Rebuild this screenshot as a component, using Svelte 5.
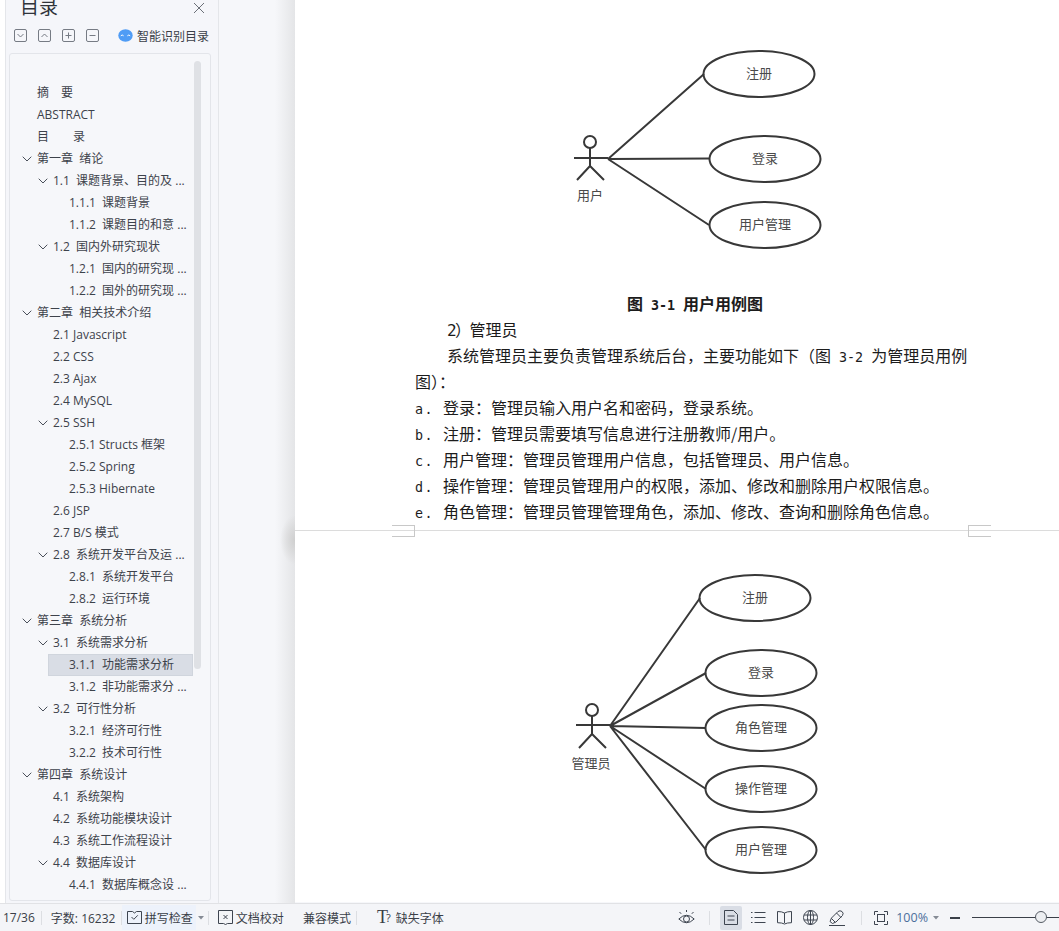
<script lang="ts">
  // level: indent depth, arrow: has a collapse chevron
  const toc = [
    { t: '摘\u3000要', l: 0 },
    { t: 'ABSTRACT', l: 0 },
    { t: '目\u3000\u3000录', l: 0 },
    { t: '第一章  绪论', l: 0, a: true },
    { t: '1.1  课题背景、目的及 ...', l: 1, a: true },
    { t: '1.1.1  课题背景', l: 2 },
    { t: '1.1.2  课题目的和意 ...', l: 2 },
    { t: '1.2  国内外研究现状', l: 1, a: true },
    { t: '1.2.1  国内的研究现 ...', l: 2 },
    { t: '1.2.2  国外的研究现 ...', l: 2 },
    { t: '第二章  相关技术介绍', l: 0, a: true },
    { t: '2.1 Javascript', l: 1 },
    { t: '2.2 CSS', l: 1 },
    { t: '2.3 Ajax', l: 1 },
    { t: '2.4 MySQL', l: 1 },
    { t: '2.5 SSH', l: 1, a: true },
    { t: '2.5.1 Structs 框架', l: 2 },
    { t: '2.5.2 Spring', l: 2 },
    { t: '2.5.3 Hibernate', l: 2 },
    { t: '2.6 JSP', l: 1 },
    { t: '2.7 B/S 模式', l: 1 },
    { t: '2.8  系统开发平台及运 ...', l: 1, a: true },
    { t: '2.8.1  系统开发平台', l: 2 },
    { t: '2.8.2  运行环境', l: 2 },
    { t: '第三章  系统分析', l: 0, a: true },
    { t: '3.1  系统需求分析', l: 1, a: true },
    { t: '3.1.1  功能需求分析', l: 2, active: true },
    { t: '3.1.2  非功能需求分 ...', l: 2 },
    { t: '3.2  可行性分析', l: 1, a: true },
    { t: '3.2.1  经济可行性', l: 2 },
    { t: '3.2.2  技术可行性', l: 2 },
    { t: '第四章  系统设计', l: 0, a: true },
    { t: '4.1  系统架构', l: 1 },
    { t: '4.2  系统功能模块设计', l: 1 },
    { t: '4.3  系统工作流程设计', l: 1 },
    { t: '4.4  数据库设计', l: 1, a: true },
    { t: '4.4.1  数据库概念设 ...', l: 2 }
  ];

  const items = [
    ['a.', '登录：管理员输入用户名和密码，登录系统。'],
    ['b.', '注册：管理员需要填写信息进行注册教师/用户。'],
    ['c.', '用户管理：管理员管理用户信息，包括管理员、用户信息。'],
    ['d.', '操作管理：管理员管理用户的权限，添加、修改和删除用户权限信息。'],
    ['e.', '角色管理：管理员管理管理角色，添加、修改、查询和删除角色信息。']
  ];

  const userCases = [
    { t: '注册', x: 464, y: 74 },
    { t: '登录', x: 470, y: 159 },
    { t: '用户管理', x: 470, y: 225 }
  ];
  const adminCases = [
    { t: '注册', x: 460, y: 68 },
    { t: '登录', x: 466, y: 143 },
    { t: '角色管理', x: 466, y: 198 },
    { t: '操作管理', x: 466, y: 259 },
    { t: '用户管理', x: 466, y: 320 }
  ];
</script>

<div class="app">
  <div class="body">
    <aside class="side">
      <div class="sideHead">
        <span class="title">目录</span>
        <svg class="close" width="12" height="12" viewBox="0 0 12 12"><path d="M1 1l10 10M11 1L1 11" stroke="#6b7078" fill="none"/></svg>
      </div>
      <div class="tools">
        <svg class="tool" width="13" height="13" viewBox="0 0 13 13"><rect x=".5" y=".5" width="12" height="12" rx="1.5"/><path d="M3.5 5l3 3 3-3"/></svg>
        <svg class="tool" width="13" height="13" viewBox="0 0 13 13"><rect x=".5" y=".5" width="12" height="12" rx="1.5"/><path d="M3.5 8l3-3 3 3"/></svg>
        <svg class="tool" width="13" height="13" viewBox="0 0 13 13"><rect x=".5" y=".5" width="12" height="12" rx="1.5"/><path d="M3.5 6.5h6M6.5 3.5v6"/></svg>
        <svg class="tool" width="13" height="13" viewBox="0 0 13 13"><rect x=".5" y=".5" width="12" height="12" rx="1.5"/><path d="M3.5 6.5h6"/></svg>
        <span class="smart">
          <svg width="15" height="13" viewBox="0 0 15 13"><ellipse cx="7.5" cy="6.5" rx="7.2" ry="6.2" fill="#4f9cf5"/><path d="M2.8 6.8q1.4-1.600 2.800 0M9.400 6.800q1.400-1.600 2.800 0" stroke="#fff" fill="none"/></svg>
          智能识别目录
        </span>
      </div>
      <div class="panel">
        <div class="thumb"></div>
        {#each toc as row}
          <div class="row lvl{row.l}" class:active={row.active}>
            {#if row.a}
              <svg class="chev" width="10" height="6" viewBox="0 0 10 6"><path d="M.7.7L5 5 9.3.7" stroke="#4a505a" fill="none"/></svg>
            {/if}
            <span class="label">{row.t}</span>
          </div>
        {/each}
      </div>
    </aside>

    <main class="view">
      <section class="page first">
        <svg class="sketch" width="764" height="290" viewBox="0 0 764 290">
          <g class="line">
            <circle cx="295" cy="142" r="6" />
            <path d="M295 148v18M279 158h34M295 166l-13 14M295 166l14 14" />
            <path d="M313 159L409 74M313 159l101 -.5M313 159l101 66" />
            {#each userCases as c}
              <ellipse cx={c.x} cy={c.y} rx="55.5" ry="23" />
            {/each}
          </g>
          {#each userCases as c}
            <text x={c.x} y={c.y + 4}>{c.t}</text>
          {/each}
          <text x="295" y="200">用户</text>
        </svg>
        <div class="doc">
          <p class="caption">图<span class="mono">{' 3-1 '}</span>用户用例图</p>
          <p class="indent one"><span class="mono">2）</span>管理员</p>
          <p class="indent">系统管理员主要负责管理系统后台，主要功能如下（图<span class="mono">{' 3-2 '}</span>为管理员用例图）：</p>
          {#each items as it}
            <p class="item"><span class="mark">{it[0]}</span><span>{it[1]}</span></p>
          {/each}
        </div>
        <span class="crop left"></span>
        <span class="crop right"></span>
      </section>
      <section class="page second">
        <svg class="sketch" width="764" height="372" viewBox="0 0 764 372">
          <g class="line">
            <circle cx="297" cy="180" r="6" />
            <path d="M297 186v18M281 195h34M297 204l-13 14M297 204l14 14" />
            <path d="M315 196L405 68M315 196l96 -53M315 196l96 2M315 196l96 63M315 196l96 124" />
            {#each adminCases as c}
              <ellipse cx={c.x} cy={c.y} rx="55.5" ry="23" />
            {/each}
          </g>
          {#each adminCases as c}
            <text x={c.x} y={c.y + 4}>{c.t}</text>
          {/each}
          <text x="296" y="238">管理员</text>
        </svg>
      </section>
      <div class="edge"></div>
      <div class="gapShade"></div>
    </main>
  </div>

  <footer class="status">
    <div class="group">
      <span class="pg">17/36</span>
      <i class="sep"></i>
      <span class="count">字数: 16232</span>
      <i class="sep spellSep"></i>
      <span class="spell">
        <svg width="15" height="15" viewBox="0 0 15 15" class="ico"><path d="M.5 1.500h5l2 1.500 2-1.500h5v12H.5z"/><path d="M4.500 7l2.300 2.300 4-4"/></svg>
        拼写检查
      </span>
      <svg class="caret" width="6" height="4" viewBox="0 0 6 4"><path d="M0 0h6L3 3.500z" fill="#858b95"/></svg>
      <i class="sep afterCaret"></i>
      <span class="txt check">
        <svg width="15" height="15" viewBox="0 0 15 15" class="ico"><path d="M.5.500h14v13h-5l-2 1-2-1h-5z"/><path d="M5.500 5l4 4M9.500 5l-4 4"/></svg>
        文档校对
      </span>
      <span class="txt compat">兼容模式</span>
      <i class="sep compatSep"></i>
      <span class="txt font"><b>T</b><em>?</em>缺失字体</span>
    </div>
    <div class="group right">
      <svg class="ico eye" width="17" height="15" viewBox="0 0 17 15"><path d="M.8 9Q8.500 1.500 16.200 9 8.500 16.500.8 9z"/><circle cx="8.500" cy="9" r="3"/><path d="M1.500 2l1.700 1.800M15.500 2l-1.700 1.800M8.500 0v2"/></svg>
      <i class="sep tall"></i>
      <span class="modeOn">
        <svg class="ico" width="14" height="15" viewBox="0 0 14 15"><path d="M.5.500h9l4 4v10H.5z"/><path d="M3.500 6h7M3.500 10h7"/></svg>
      </span>
      <svg class="ico" width="15" height="13" viewBox="0 0 15 13"><path d="M3.500 1.500h11M3.500 6.500h11M3.500 11.500h11M0 1.500h1.500M0 6.500h1.500M0 11.500h1.500"/></svg>
      <svg class="ico" width="15" height="14" viewBox="0 0 15 14"><path d="M7.500 2Q5 .5.500.5v11.200q4.500 0 7 1.300 2.500-1.300 7-1.300V.5Q10 .5 7.500 2zM7.500 2v10"/></svg>
      <svg class="ico" width="15" height="15" viewBox="0 0 15 15"><circle cx="7.500" cy="7.500" r="7"/><ellipse cx="7.500" cy="7.500" rx="3" ry="7"/><path d="M1 5h13M1 10h13M7.500.5v14"/></svg>
      <svg class="ico pen" width="16" height="16" viewBox="0 0 16 16"><path d="M1 11.500l1.500-3.500 6.500-6.500Q11 0 13 1.500t.5 4L7 12l-3.500 1.500zM7.500 3l4.500 4.500M2.500 8.500l3.500 3.500M0 15.500h16"/></svg>
      <i class="sep tall second"></i>
      <svg class="ico frame" width="14" height="14" viewBox="0 0 14 14"><path d="M.5 4V.5H4M10 .5h3.500V4M13.500 10v3.500H10M4 13.500H.5V10"/><rect x="3.500" y="3.500" width="7" height="7"/></svg>
      <span class="zoom">100%</span>
      <svg width="6" height="4" viewBox="0 0 6 4"><path d="M0 0h6L3 3.500z" fill="#858b95"/></svg>
      <span class="minus"></span>
      <div class="slider"><span class="knob"></span></div>
    </div>
  </footer>
</div>

<style>
  :global(body) {
    margin: 0;
    overflow: hidden;
  }

  .app {
    width: 1059px;
    height: 931px;
    display: flex;
    flex-direction: column;
    font-family: "Open Sans", "Noto Sans CJK SC", sans-serif;
    color: #3a3f48;
    background: #fff;
    overflow: hidden;
  }

  .body {
    flex: 1;
    min-height: 0;
    display: flex;
  }

  .side {
    margin-left: 5px;
    flex: none;
    background: #f5f6fa;
    border-left: 1px solid #e4e6ea;
    border-right: 1px solid #e4e6ea;
    width: 212px;
    overflow: hidden;
  }

  .sideHead {
    height: 18px;
    position: relative;
    overflow: hidden;
  }

  .title {
    position: absolute;
    left: 14px;
    top: -7px;
    font-size: 19px;
    line-height: 28px;
    color: #30343b;
  }

  .close {
    position: absolute;
    right: 13px;
    top: 2px;
  }

  .tools {
    height: 35px;
    display: flex;
    align-items: center;
    padding: 0 0 0 8px;
    gap: 11px;
  }

  .tool {
    fill: none;
    stroke: #767b84;
    flex: none;
  }

  .smart {
    display: flex;
    align-items: center;
    gap: 4px;
    font-size: 12px;
    margin-left: 8px;
    white-space: nowrap;
  }

  .panel {
    position: relative;
    height: 848px;
    margin: 0 7px 0 3px;
    padding-top: 28px;
    box-sizing: border-box;
    background: #f6f7fa;
    border: 1px solid #e3e5ea;
    border-radius: 3px;
    overflow: hidden;
  }

  .thumb {
    position: absolute;
    left: 184px;
    top: 7px;
    width: 7px;
    height: 608px;
    border-radius: 4px;
    background: #dfe1e5;
  }

  .row {
    position: relative;
    height: 22px;
    line-height: 22px;
    font-size: 12px;
    color: #3d424b;
  }

  .label {
    white-space: pre;
  }

  .lvl0 { padding-left: 27px; }
  .lvl1 { padding-left: 43px; }
  .lvl2 { padding-left: 59px; }

  .chev {
    position: absolute;
    top: 8px;
    margin-left: -15px;
  }

  .active {
    margin-left: 38px;
    margin-right: 17px;
    padding-left: 21px;
    background: #d9dde5;
    box-shadow: inset 0 0 0 1px #d0d5dd;
  }

  .view {
    flex: 1;
    min-width: 0;
    position: relative;
    background: #f6f7fa;
    padding-left: 76px;
    overflow: hidden;
  }

  .edge {
    position: absolute;
    left: 56px;
    top: 0;
    bottom: 0;
    width: 20px;
    background: linear-gradient(to right, #f6f7fa, #e4e5e7);
  }

  .gapShade {
    position: absolute;
    left: 61px;
    top: 515px;
    width: 15px;
    height: 50px;
    background: radial-gradient(ellipse at 100% 50%, #cfcfcf, rgba(207, 207, 207, 0) 70%);
  }

  .page {
    position: relative;
    width: 764px;
    background: #fff;
  }

  .first {
    height: 531px;
    margin-bottom: -1px;
    box-sizing: border-box;
    border-bottom: 1px solid #dcdcdc;
    z-index: 1;
  }

  .sketch {
    display: block;
    font-family: "Noto Sans CJK SC", sans-serif;
  }

  .sketch text {
    font-size: 13px;
    text-anchor: middle;
    fill: #4a4a4a;
  }

  .line {
    fill: none;
    stroke: #383838;
    stroke-width: 2;
  }

  .doc {
    margin: 0 84px 0 120px;
    font-family: "Noto Sans CJK SC", sans-serif;
    font-size: 16px;
    line-height: 26px;
    color: #1c1c1c;
  }

  .doc p {
    margin: 0;
  }

  .caption {
    height: 26px;
    text-align: center;
    font-weight: 700;
    white-space: pre;
  }

  .indent {
    text-indent: 32px;
  }

  .one {
    height: 26px;
  }

  .mono {
    font-family: "DejaVu Sans Mono", "Noto Sans CJK SC", monospace;
    font-size: 13.33px;
    line-height: 1;
    white-space: pre;
  }

  .one .mono {
    font-size: 16px;
    letter-spacing: -1.6px;
  }

  .item {
    display: flex;
    align-items: baseline;
    height: 26px;
    white-space: nowrap;
  }

  .mark {
    width: 28px;
    flex: none;
    font-family: "DejaVu Sans Mono", monospace;
    font-size: 13.33px;
    letter-spacing: 1.5px;
  }

  .crop {
    position: absolute;
    top: 525px;
    width: 23px;
    height: 12px;
    border-top: 1px solid #c8c8c8;
    border-bottom: 1px solid #c8c8c8;
    box-sizing: border-box;
  }

  .crop.left {
    left: 97px;
    border-right: 1px solid #c8c8c8;
  }

  .crop.right {
    left: 673px;
    border-left: 1px solid #c8c8c8;
  }

  .status {
    height: 28px;
    flex: none;
    display: flex;
    justify-content: space-between;
    background: #f4f5f8;
    border-top: 1px solid #e1e2e5;
    box-sizing: border-box;
    font-size: 12px;
    color: #3a3f48;
  }

  .group {
    display: flex;
    align-items: center;
    white-space: nowrap;
  }

  .pg { margin-left: 3px; }

  .count {
    width: 66px;
  }

  .sep {
    width: 1px;
    height: 14px;
    background: #dcdee2;
    margin: 0 9px 0 6px;
  }

  .spellSep {
    margin: 0 0 0 4px;
  }

  .afterCaret {
    margin: 0 9px 0 4px;
  }

  .compatSep {
    margin: 0 0 0 5px;
  }

  .sep.tall {
    margin: 0 10px 0 14px;
  }

  .sep.second {
    margin: 0 12px 0 16px;
  }

  .ico {
    fill: none;
    stroke: #3e4550;
    flex: none;
  }

  .spell {
    display: flex;
    align-items: center;
    gap: 3px;
    height: 25px;
    padding: 0 0 0 5px;
    width: 69px;
    background: #edf2fb;
  }

  .caret {
    margin-left: 2px;
  }

  .txt {
    display: flex;
    align-items: center;
    gap: 3px;
  }

  .compat {
    margin-left: 19px;
  }

  .font {
    gap: 0;
  }

  .font b {
    font-family: "Liberation Serif", serif;
    font-weight: 400;
    font-size: 18px;
    margin-left: 20px;
  }

  .font em {
    font-style: normal;
    margin: 0 5px 0 -2px;
    font-size: 11px;
  }

  .modeOn {
    width: 22px;
    height: 24px;
    display: grid;
    place-items: center;
    background: #d9dde5;
    border-radius: 2px;
    margin-right: 9px;
  }

  .right > .ico {
    margin-right: 11px;
  }

  .right > .eye,
  .right > .pen {
    margin-right: 0;
  }

  .right > .frame {
    margin-right: 8px;
  }

  .zoom {
    color: #4c6f9c;
    font-size: 12.5px;
    margin-right: 5px;
  }

  .minus {
    width: 10px;
    height: 2px;
    background: #3a3f48;
    margin: 0 12px 0 11px;
  }

  .slider {
    position: relative;
    width: 87px;
    height: 1px;
    background: #3a3f48;
  }

  .knob {
    position: absolute;
    left: 63px;
    top: -6px;
    width: 10px;
    height: 10px;
    border: 1px solid #555b64;
    border-radius: 50%;
    background: #eceef1;
  }
</style>
